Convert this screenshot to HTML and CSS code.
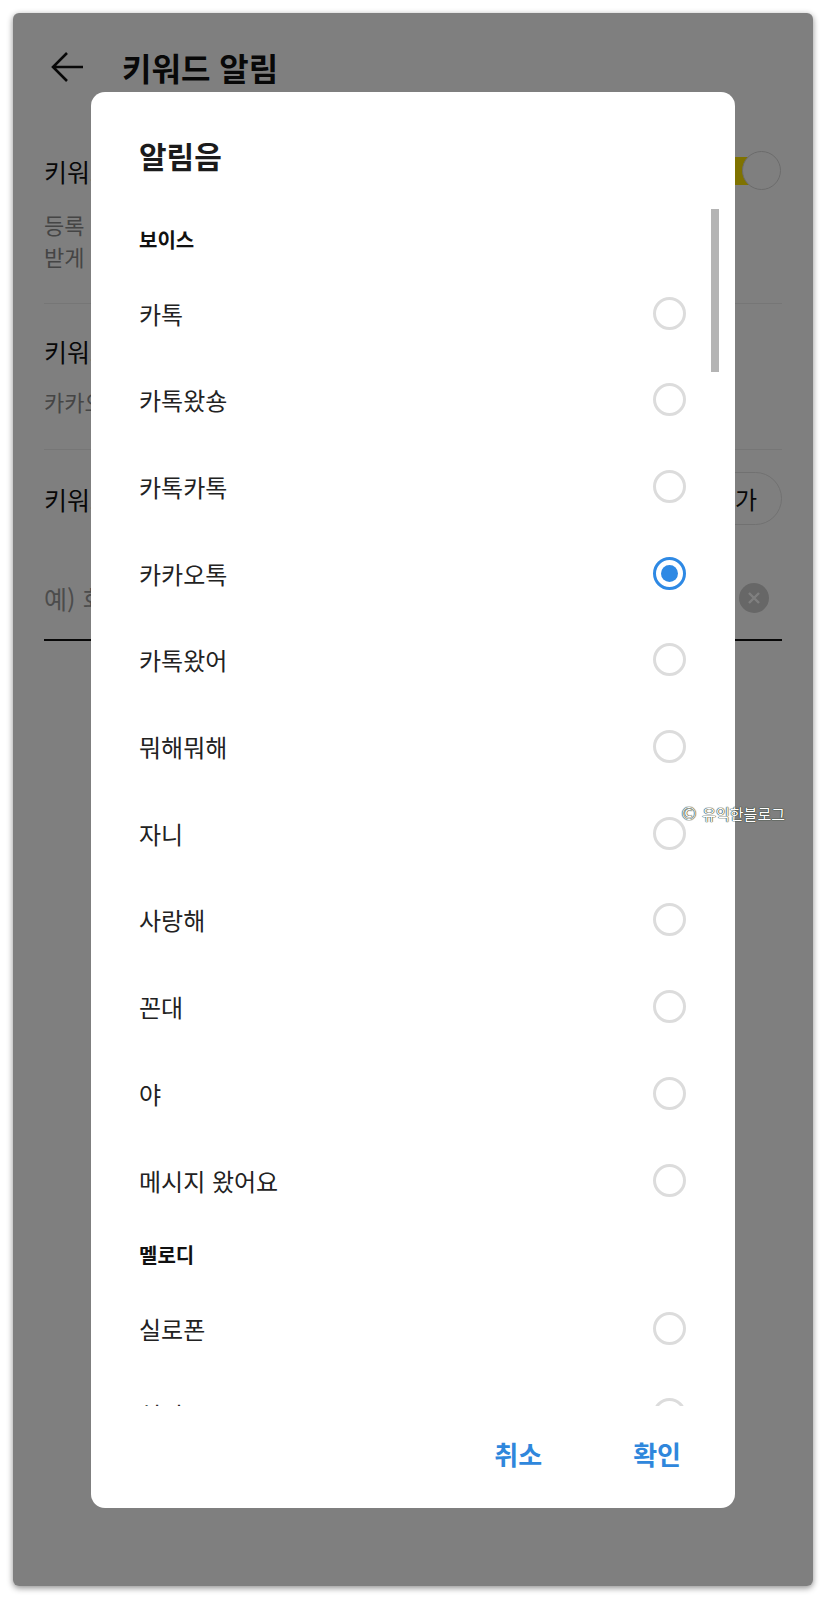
FILE: index.html
```html
<!DOCTYPE html>
<html lang="ko">
<head>
    <meta charset="UTF-8">
    <meta name="viewport" content="width=device-width, initial-scale=1.0">
    <title>키워드 알림</title>
    <link rel="stylesheet" href="styles.css">
</head>
<body>

    <div class="screen">
        <div class="page">
            <header class="appbar">
                <svg class="back" width="34" height="34" viewBox="0 0 34 34">
                    <path d="M32 17H2M16 3L2 17l14 14" fill="none" stroke="#111" stroke-width="2.6"/>
                </svg>
                <h1>키워드 알림</h1>
            </header>

            <section class="setting">
                <div class="setting-row">
                    <span class="label">키워드 알림</span>
                    <span class="toggle"><span class="track"></span><span class="thumb"></span></span>
                </div>
                <p class="desc">등록 키워드가 포함된 채팅 메시지가 오면 알림을<br>받게 됩니다.</p>
            </section>

            <section class="setting">
                <span class="label">키워드 알림음</span>
                <p class="desc sub">카카오톡</p>
            </section>

            <section class="setting last">
                <div class="setting-row">
                    <span class="label">키워드</span>
                    <button class="pill">추가</button>
                </div>
                <div class="keyword-input">
                    <span class="placeholder">예) 회의, 카카오</span>
                    <span class="clear">
                        <svg width="14" height="14" viewBox="0 0 14 14">
                            <path d="M2 2l10 10M12 2L2 12" stroke="#fff" stroke-width="2.4"/>
                        </svg>
                    </span>
                </div>
            </section>
        </div>

        <div class="dim">
            <div class="dialog">
                <h2 class="dialog-title">알림음</h2>

                <div class="sound-list">
                    <div class="group-label">보이스</div>
                    <div class="sound"><span>카톡</span><i class="radio"></i></div>
                    <div class="sound"><span>카톡왔숑</span><i class="radio"></i></div>
                    <div class="sound"><span>카톡카톡</span><i class="radio"></i></div>
                    <div class="sound"><span>카카오톡</span><i class="radio checked"></i></div>
                    <div class="sound"><span>카톡왔어</span><i class="radio"></i></div>
                    <div class="sound"><span>뭐해뭐해</span><i class="radio"></i></div>
                    <div class="sound"><span>자니</span><i class="radio"></i></div>
                    <div class="sound"><span>사랑해</span><i class="radio"></i></div>
                    <div class="sound"><span>꼰대</span><i class="radio"></i></div>
                    <div class="sound"><span>야</span><i class="radio"></i></div>
                    <div class="sound"><span>메시지 왔어요</span><i class="radio"></i></div>
                    <div class="group-label">멜로디</div>
                    <div class="sound"><span>실로폰</span><i class="radio"></i></div>
                    <div class="sound"><span>허밍</span><i class="radio"></i></div>
                    <div class="sound"><span>마림바</span><i class="radio"></i></div>
                    <span class="scrollbar"></span>
                </div>

                <div class="dialog-actions">
                    <button class="text-btn">취소</button>
                    <button class="text-btn">확인</button>
                </div>
            </div>
        </div>

        <span class="watermark"><span class="copy">©</span> 유익한블로그</span>
    </div>

</body>
</html>
```

FILE: styles.css
```css
body {
    margin: 0;
    background-color: #fff;
    font-family: "Noto Sans CJK KR", "Noto Sans", sans-serif;
}

.screen {
    position: relative;
    width: 800px;
    height: 1573px;
    margin: 13px;
    border-radius: 6px;
    overflow: hidden;
    background-color: #fff;
    box-shadow: 0 2px 6px rgba(0, 0, 0, 0.45);
}

/* page behind the dialog */
.page {
    padding: 0 31px;
    color: #111;
}

.appbar {
    height: 108px;
    display: flex;
    align-items: center;
    margin-left: 7px;
}

.back {
    display: block;
    margin-right: 37px;
}

.appbar h1 {
    margin: 0;
    font-size: 32px;
    font-weight: 700;
    line-height: 40px;
}

.setting {
    padding: 30px 0 31px;
    border-bottom: 1px solid #ececec;
}

.setting + .setting {
    padding-bottom: 32px;
}

.setting.last {
    padding-top: 22px;
    border-bottom: none;
}

.setting-row {
    display: flex;
    align-items: center;
    justify-content: space-between;
}

.label {
    display: block;
    font-size: 25px;
    line-height: 34px;
}

.desc {
    margin: 17px 0 0;
    font-size: 22px;
    line-height: 32px;
    color: #8a8a8a;
}

.desc.sub {
    margin-top: 17px;
}

.toggle {
    position: relative;
    width: 64px;
    height: 40px;
}

.toggle .track {
    position: absolute;
    left: 0;
    top: 6px;
    width: 56px;
    height: 28px;
    border-radius: 14px;
    background-color: #fee500;
}

.toggle .thumb {
    position: absolute;
    right: 1px;
    top: 0;
    width: 37px;
    height: 37px;
    border-radius: 50%;
    background-color: #fff;
    border: 1px solid #d6d6d6;
}

.pill {
    height: 53px;
    padding: 0 24px;
    border: 1px solid #e2e2e2;
    border-radius: 27px;
    background: #fff;
    font-family: inherit;
    font-size: 24px;
    color: #111;
}

.keyword-input {
    height: 82px;
    margin-top: 32px;
    display: flex;
    align-items: center;
    justify-content: space-between;
    border-bottom: 2px solid #111;
}

.placeholder {
    font-size: 25px;
    color: #999;
}

.clear {
    width: 30px;
    height: 30px;
    margin-right: 13px;
    border-radius: 50%;
    background-color: #cfcfcf;
    display: flex;
    align-items: center;
    justify-content: center;
}

/* dialog */
.dim {
    position: absolute;
    inset: 0;
    background-color: rgba(0, 0, 0, 0.5);
    display: flex;
    align-items: center;
    justify-content: center;
}

.dialog {
    width: 644px;
    height: 1416px;
    border-radius: 14px;
    background-color: #fff;
    display: flex;
    flex-direction: column;
    overflow: hidden;
}

.dialog-title {
    margin: 0;
    padding: 43px 48px 34px;
    font-size: 30px;
    font-weight: 700;
    line-height: 40px;
    color: #1b1b1b;
}

.sound-list {
    position: relative;
    height: 1197px;
    overflow: hidden;
}

.group-label {
    height: 61.3px;
    padding-left: 48px;
    display: flex;
    align-items: center;
    font-size: 20px;
    font-weight: 700;
    color: #111;
}

.sound {
    height: 86.7px;
    padding: 0 49px 0 48px;
    display: flex;
    align-items: center;
    justify-content: space-between;
    font-size: 24px;
    color: #222;
}

.radio {
    width: 27px;
    height: 27px;
    border: 3px solid #dcdcdc;
    border-radius: 50%;
    display: flex;
    align-items: center;
    justify-content: center;
}

.radio.checked {
    border-color: #2e89e4;
}

.radio.checked::after {
    content: "";
    width: 17px;
    height: 17px;
    border-radius: 50%;
    background-color: #2e89e4;
}

.scrollbar {
    position: absolute;
    top: 0;
    right: 16px;
    width: 8px;
    height: 163px;
    background-color: #b4b4b4;
}

.dialog-actions {
    flex: 1;
    display: flex;
    align-items: center;
    justify-content: flex-end;
    gap: 91px;
    padding: 0 54px 6px 0;
}

.text-btn {
    padding: 0;
    border: none;
    background: none;
    font-family: inherit;
    font-size: 26px;
    font-weight: 700;
    color: #2f87dc;
}

.watermark {
    position: absolute;
    left: 667px;
    top: 789px;
    font-size: 15px;
    line-height: 24px;
    color: #fff;
    text-shadow: 0 0 1px #2e3d2e, 0 0 1px #2e3d2e, 0 0 1px #2e3d2e;
}

.watermark .copy {
    font-family: "DejaVu Sans", sans-serif;
    font-size: 18px;
}
```
